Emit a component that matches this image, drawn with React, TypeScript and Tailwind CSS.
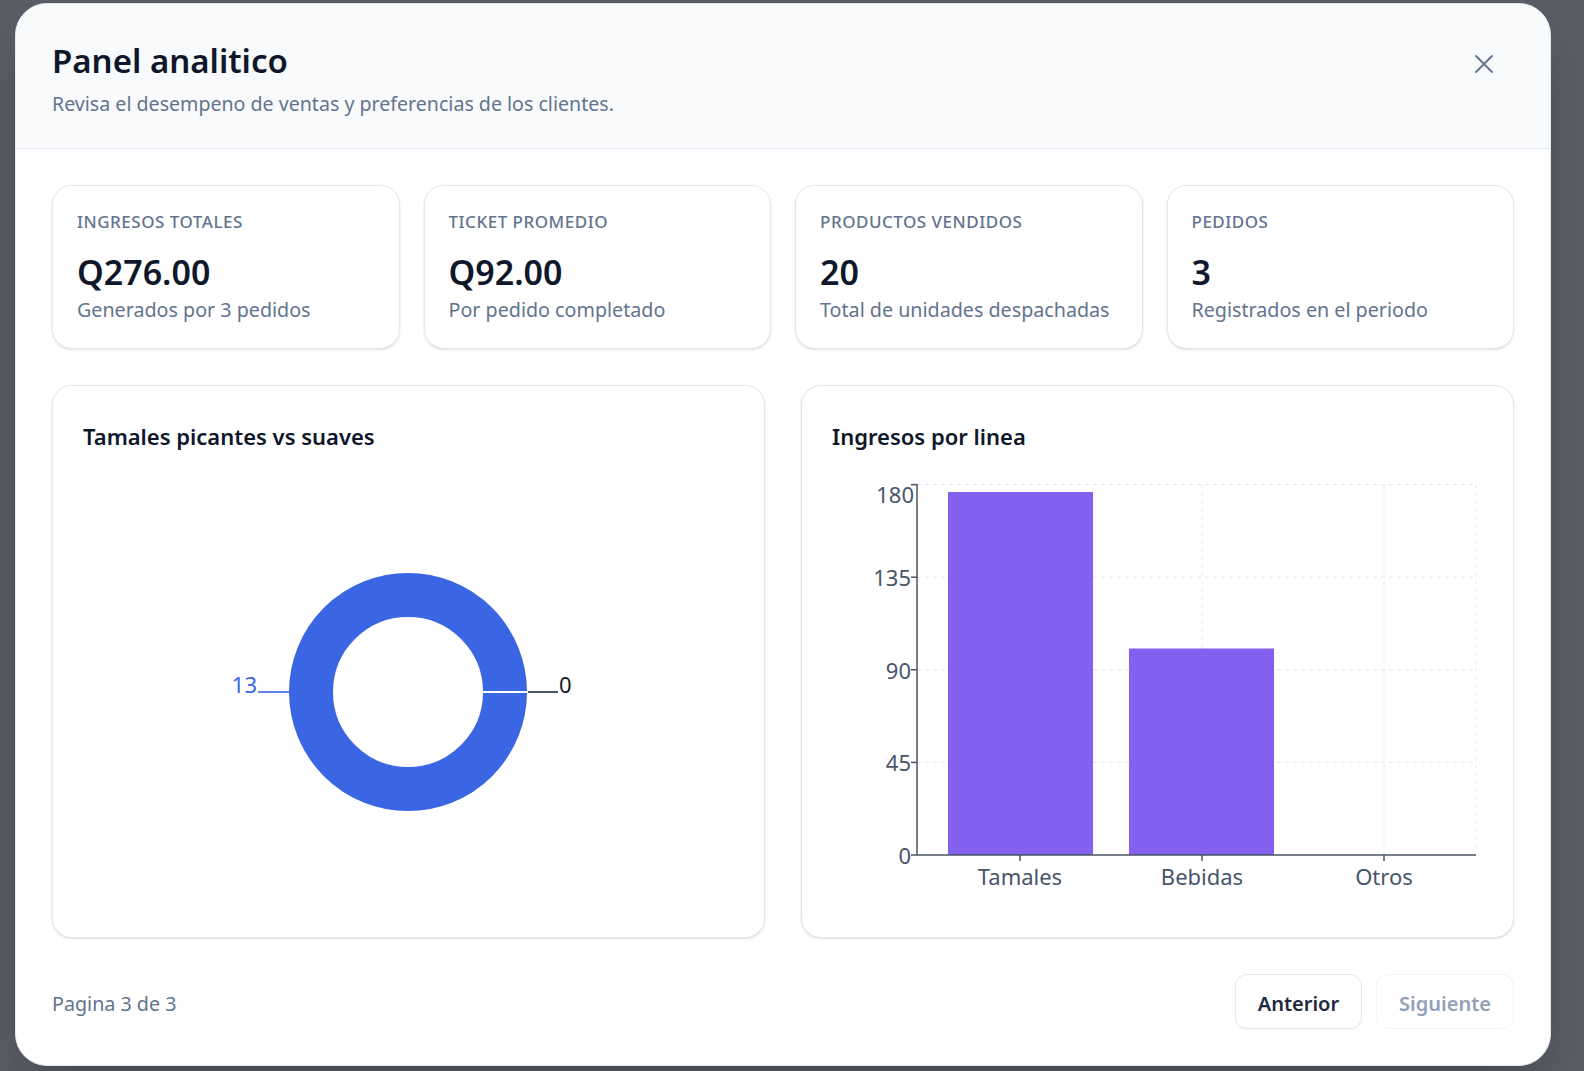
import { FC } from 'react'

const font = { fontFamily: '"Noto Sans", "Open Sans", sans-serif' }

const stats = [
  { label: 'Ingresos totales', value: 'Q276.00', hint: 'Generados por 3 pedidos' },
  { label: 'Ticket promedio', value: 'Q92.00', hint: 'Por pedido completado' },
  { label: 'Productos vendidos', value: '20', hint: 'Total de unidades despachadas' },
  { label: 'Pedidos', value: '3', hint: 'Registrados en el periodo' },
]

const StatCard: FC<{ label: string; value: string; hint: string }> = ({ label, value, hint }) => (
  <div className="rounded-[20px] border border-slate-200 bg-white px-6 pt-6 pb-6 shadow-sm">
    <div className="text-[17px] leading-6 font-medium uppercase tracking-[0.03em] text-slate-500">{label}</div>
    <div className="mt-[18px] text-[34px] leading-10 font-semibold text-slate-900">{value}</div>
    <div className="mt-1 text-[19.7px] leading-7 text-slate-500">{hint}</div>
  </div>
)

const DonutChart = () => (
  <svg width="651" height="440" viewBox="0 0 651 440">
    <circle cx="325" cy="232" r="97" fill="none" stroke="#3a65e3" strokeWidth="44" />
    <line x1="400" y1="232" x2="445" y2="232" stroke="#ffffff" strokeWidth="2" />
    <line x1="206" y1="232" x2="175" y2="232" stroke="#3a65e3" strokeOpacity="0.8" strokeWidth="2" />
    <line x1="445" y1="232" x2="475" y2="232" stroke="#4b5563" strokeWidth="2" />
    <text x="174" y="224" textAnchor="end" dominantBaseline="central" fontSize="22" fill="#3a65e3">
      13
    </text>
    <text x="476" y="224" dominantBaseline="central" fontSize="22" fill="#111827">
      0
    </text>
  </svg>
)

const yTicks = [
  { v: '0', y: 395 },
  { v: '45', y: 302.4 },
  { v: '90', y: 209.8 },
  { v: '135', y: 117.2 },
  { v: '180', y: 24.6 },
]

const bars = [
  { name: 'Tamales', x: 116, top: 32, cx: 188 },
  { name: 'Bebidas', x: 297, top: 188.5, cx: 370 },
  { name: 'Otros', x: 479, top: 395, cx: 552 },
]

const BarChart = () => (
  <svg width="651" height="440" viewBox="0 0 651 440">
    {yTicks.slice(1).map((t) => (
      <line key={t.v} x1="85" y1={t.y} x2="644" y2={t.y} stroke="#e2e8f0" strokeDasharray="4 4" />
    ))}
    {[370, 552, 644].map((x) => (
      <line key={x} x1={x} y1="24.6" x2={x} y2="395" stroke="#e2e8f0" strokeDasharray="4 4" />
    ))}
    {bars.map((b) =>
      b.top < 395 ? (
        <rect key={b.name} x={b.x} y={b.top} width="145" height={395 - b.top} fill="#855fee" />
      ) : null,
    )}
    <line x1="85" y1="24" x2="85" y2="395" stroke="#4b5563" strokeWidth="1.5" />
    <line x1="85" y1="395" x2="644" y2="395" stroke="#4b5563" strokeWidth="1.5" />
    {yTicks.map((t) => (
      <g key={t.v}>
        <line x1="79" y1={t.y} x2="85" y2={t.y} stroke="#4b5563" strokeWidth="1.5" />
        <text
          x={t.v === '180' ? 82 : 79}
          y={t.v === '180' ? 34 : t.y}
          textAnchor="end"
          dominantBaseline="central"
          fontSize="22"
          fill="#475569"
        >
          {t.v}
        </text>
      </g>
    ))}
    {bars.map((b) => (
      <g key={b.name}>
        <line x1={b.cx} y1="395" x2={b.cx} y2="401" stroke="#4b5563" strokeWidth="1.5" />
        <text x={b.cx} y="416" textAnchor="middle" dominantBaseline="central" fontSize="22" fill="#475569">
          {b.name}
        </text>
      </g>
    ))}
  </svg>
)

const ChartCard: FC<{ title: string; children: React.ReactNode }> = ({ title, children }) => (
  <div className="flex h-[553px] flex-col rounded-[20px] border border-slate-200 bg-white px-[30px] pt-9 shadow-sm">
    <h3 className="text-[22px] leading-7 font-semibold text-slate-900">{title}</h3>
    <div className="mt-2.5">{children}</div>
  </div>
)

export default function App() {
  return (
    <div className="min-h-[1071px] bg-[#5a5d66] pl-[15px] pt-[3px]" style={font}>
      <div className="w-[1536px] overflow-hidden rounded-4xl border border-slate-200 bg-white shadow-2xl">
        <div className="flex items-start justify-between border-b border-slate-200 bg-slate-50 px-9 pt-[39px] pb-[30px]">
          <div>
            <h2 className="text-[33px] leading-9 font-semibold text-slate-900">Panel analitico</h2>
            <p className="mt-[11px] text-[19.6px] leading-7 text-slate-500">
              Revisa el desempeno de ventas y preferencias de los clientes.
            </p>
          </div>
          <button className="mt-px mr-2.5 flex h-10 w-10 items-center justify-center text-slate-500">
            <svg width="18" height="18" viewBox="0 0 18 18" fill="none" stroke="currentColor" strokeWidth="1.8" strokeLinecap="round">
              <path d="M1 1 17 17M17 1 1 17" />
            </svg>
          </button>
        </div>

        <div className="flex flex-col gap-9 p-9">
          <div className="grid grid-cols-4 gap-6">
            {stats.map((s) => (
              <StatCard key={s.label} {...s} />
            ))}
          </div>

          <div className="grid grid-cols-2 gap-9">
            <ChartCard title="Tamales picantes vs suaves">
              <DonutChart />
            </ChartCard>
            <ChartCard title="Ingresos por linea">
              <BarChart />
            </ChartCard>
          </div>

          <div className="flex items-center justify-between">
            <span className="pt-1 text-[19.7px] text-slate-500">Pagina 3 de 3</span>
            <div className="flex gap-3.5">
              <button className="h-[55px] rounded-xl border border-slate-200 bg-white px-[22px] pt-1 text-[20px] font-semibold text-slate-800 shadow-xs">
                Anterior
              </button>
              <button
                disabled
                className="h-[55px] rounded-xl border border-slate-100 bg-white px-[22px] pt-1 text-[20px] font-semibold text-slate-400"
              >
                Siguiente
              </button>
            </div>
          </div>
        </div>
      </div>
    </div>
  )
}
